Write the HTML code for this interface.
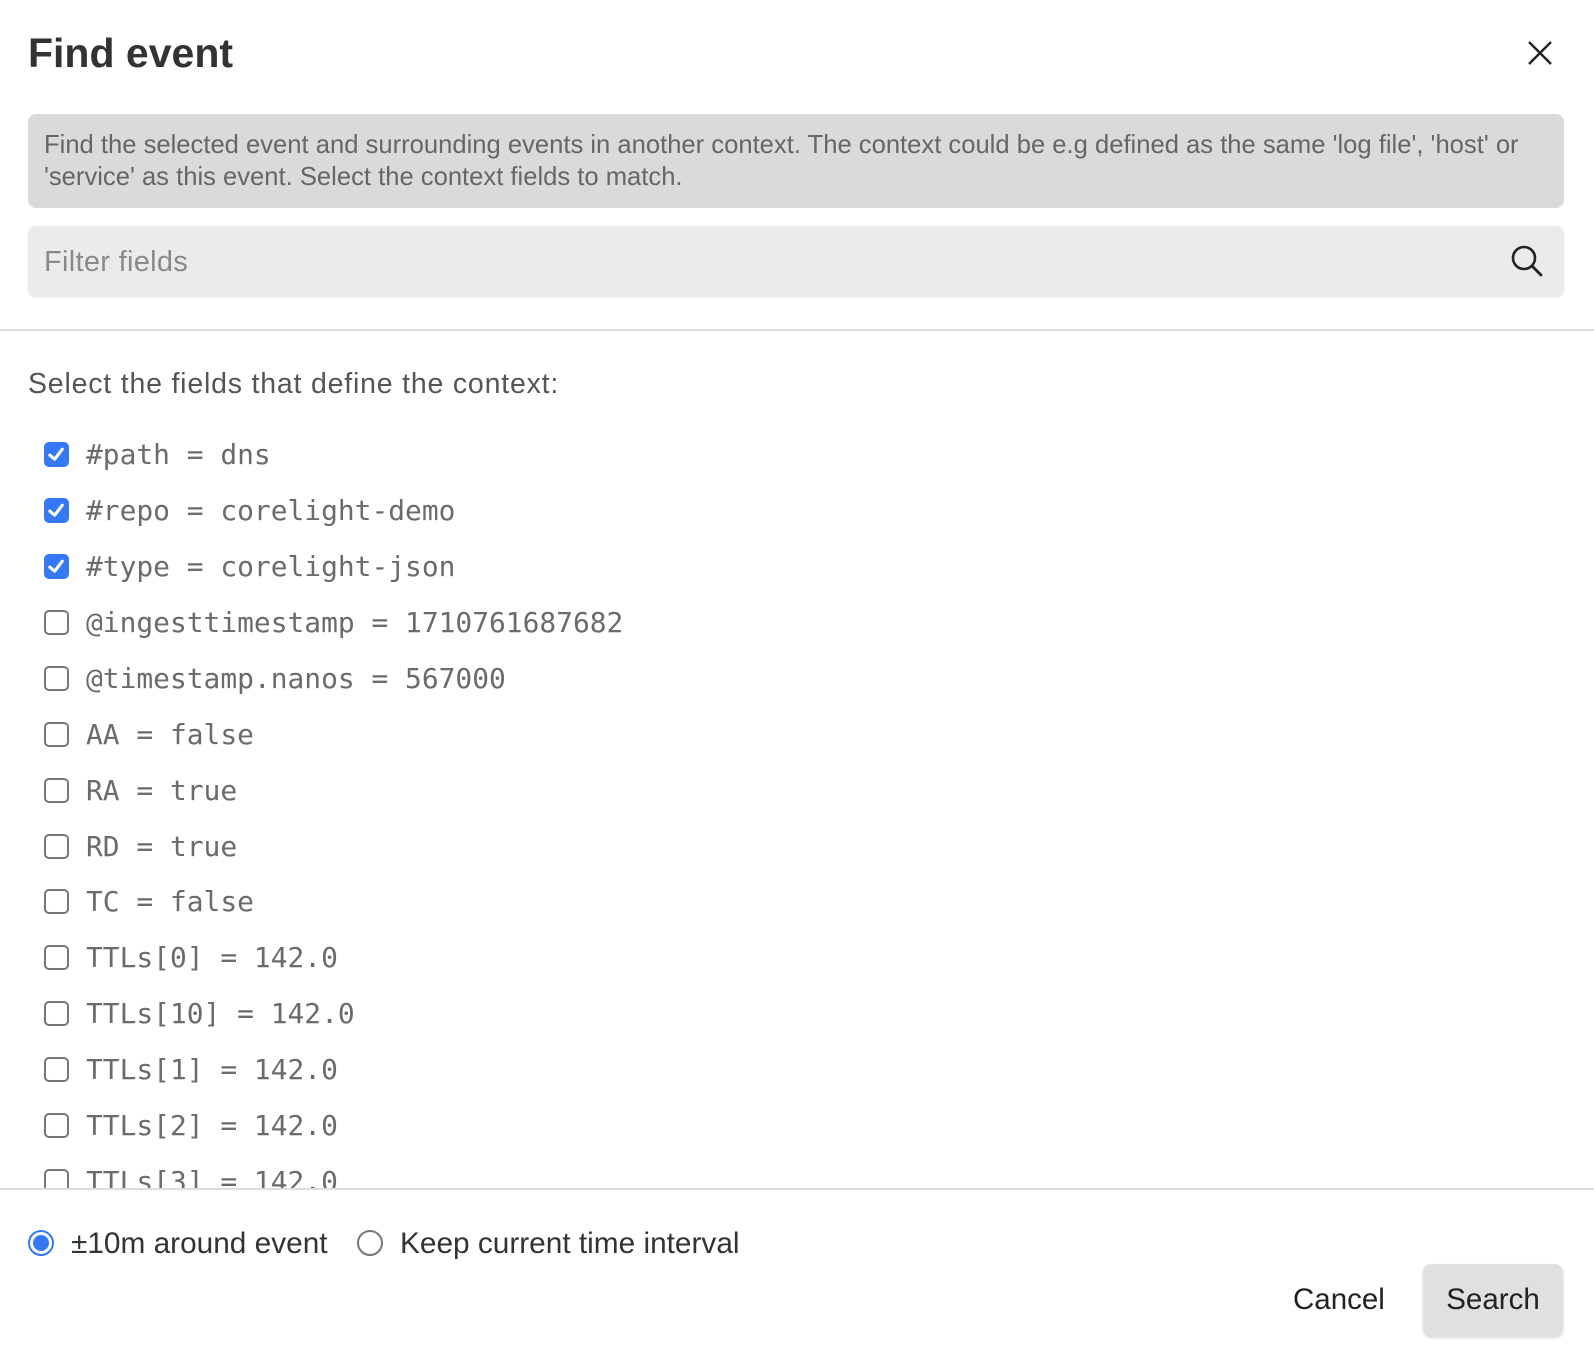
<!DOCTYPE html>
<html><head><meta charset="utf-8"><style>
*{box-sizing:border-box;margin:0;padding:0}
html,body{width:1594px;height:1352px;background:#fff;overflow:hidden;font-family:"Liberation Sans",sans-serif;position:relative}
.title{position:absolute;left:28px;top:30px;font-size:41px;font-weight:bold;color:#333;letter-spacing:0px}
.close{position:absolute;left:1527px;top:40px}
.info{position:absolute;left:28px;top:114px;width:1536px;height:94px;background:#dadada;border-radius:8px;padding:15px 16px;color:#666;font-size:25.6px;line-height:32px;white-space:nowrap}
.filter{position:absolute;left:28px;top:226px;width:1536px;height:70px;background:#ebebeb;border-radius:8px;box-shadow:0 1px 2px rgba(0,0,0,.12)}
.filter span{position:absolute;left:16px;top:20px;font-size:29px;letter-spacing:0.3px;color:#8a8a8a}
.hr{position:absolute;left:0;width:1594px;height:2px;background:#ddd}
.sel{position:absolute;left:28px;top:368px;font-size:28.5px;letter-spacing:0.8px;color:#555}
.list{position:absolute;left:0;top:420px;width:1594px;height:768px;overflow:hidden}
.row{position:absolute;left:44px;height:30px}
.cb{position:absolute;left:0;top:2px;width:25px;height:25px;border:2px solid #777;border-radius:5px;background:#fff}
.cb.on{background:#3478f6;border-color:#3478f6}
.row .t{position:absolute;left:42px;top:-2px;font-family:"DejaVu Sans Mono","Liberation Mono",monospace;font-size:27.9px;color:#6b6b6b;white-space:nowrap}
.radio{position:absolute;top:1230px;width:26px;height:26px;border-radius:50%;border:2px solid #777}
.radio.on{border-color:#3478f6}
.radio.on::after{content:"";position:absolute;left:3px;top:3px;width:16px;height:16px;border-radius:50%;background:#3478f6}
.rl{position:absolute;top:1227px;font-size:29.8px;color:#333;white-space:nowrap}
.cancel{position:absolute;left:1293px;top:1283px;font-size:29.5px;color:#222}
.search{position:absolute;left:1423px;top:1264px;width:140px;height:72px;background:#e0e0e0;border-radius:8px;box-shadow:0 2px 3px rgba(0,0,0,.15);font-size:29.5px;color:#222;text-align:center;line-height:72px}
</style></head><body>
<div class="title">Find event</div>
<svg class="close" width="26" height="26" viewBox="0 0 26 26"><path d="M2 2L24 24M24 2L2 24" stroke="#222" stroke-width="2.4" fill="none"/></svg>
<div class="info">Find the selected event and surrounding events in another context. The context could be e.g defined as the same 'log file', 'host' or<br>'service' as this event. Select the context fields to match.</div>
<div class="filter"><span>Filter fields</span></div>
<svg style="position:absolute;left:1510px;top:244px" width="34" height="34" viewBox="0 0 34 34"><circle cx="14" cy="14" r="11" stroke="#222" stroke-width="2.6" fill="none"/><path d="M22 22L31 31" stroke="#222" stroke-width="2.8" stroke-linecap="round"/></svg>
<div class="hr" style="top:329px"></div>
<div class="sel">Select the fields that define the context:</div>
<div class="list">
<div class="row" style="top:20px"><div class="cb on"><svg width="21" height="21" viewBox="0 0 22 22"><path d="M4 11.5L9 16L17 5.5" stroke="#fff" stroke-width="3.2" fill="none" stroke-linecap="round" stroke-linejoin="round"/></svg></div><div class="t">#path = dns</div></div>
<div class="row" style="top:76px"><div class="cb on"><svg width="21" height="21" viewBox="0 0 22 22"><path d="M4 11.5L9 16L17 5.5" stroke="#fff" stroke-width="3.2" fill="none" stroke-linecap="round" stroke-linejoin="round"/></svg></div><div class="t">#repo = corelight-demo</div></div>
<div class="row" style="top:132px"><div class="cb on"><svg width="21" height="21" viewBox="0 0 22 22"><path d="M4 11.5L9 16L17 5.5" stroke="#fff" stroke-width="3.2" fill="none" stroke-linecap="round" stroke-linejoin="round"/></svg></div><div class="t">#type = corelight-json</div></div>
<div class="row" style="top:188px"><div class="cb"></div><div class="t">@ingesttimestamp = 1710761687682</div></div>
<div class="row" style="top:244px"><div class="cb"></div><div class="t">@timestamp.nanos = 567000</div></div>
<div class="row" style="top:300px"><div class="cb"></div><div class="t">AA = false</div></div>
<div class="row" style="top:356px"><div class="cb"></div><div class="t">RA = true</div></div>
<div class="row" style="top:412px"><div class="cb"></div><div class="t">RD = true</div></div>
<div class="row" style="top:467px"><div class="cb"></div><div class="t">TC = false</div></div>
<div class="row" style="top:523px"><div class="cb"></div><div class="t">TTLs[0] = 142.0</div></div>
<div class="row" style="top:579px"><div class="cb"></div><div class="t">TTLs[10] = 142.0</div></div>
<div class="row" style="top:635px"><div class="cb"></div><div class="t">TTLs[1] = 142.0</div></div>
<div class="row" style="top:691px"><div class="cb"></div><div class="t">TTLs[2] = 142.0</div></div>
<div class="row" style="top:747px"><div class="cb"></div><div class="t">TTLs[3] = 142.0</div></div>
</div>
<div class="hr" style="top:1188px"></div>
<div class="radio on" style="left:28px"></div>
<div class="rl" style="left:71px">±10m around event</div>
<div class="radio" style="left:357px"></div>
<div class="rl" style="left:400px">Keep current time interval</div>
<div class="cancel">Cancel</div>
<div class="search">Search</div>
</body></html>
